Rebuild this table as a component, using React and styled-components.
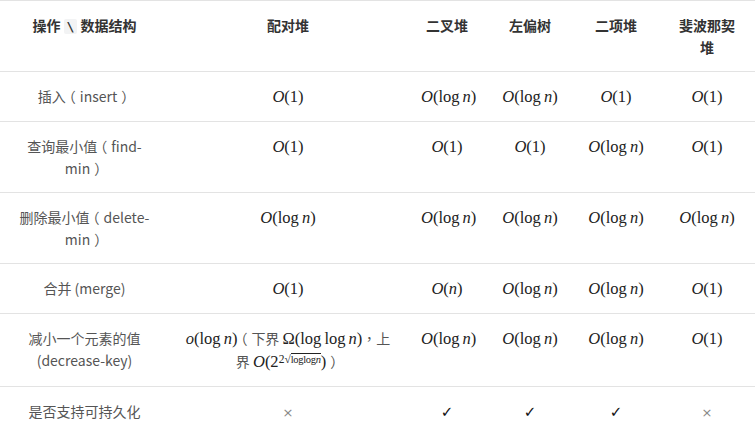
import React from "react";
import styled, { createGlobalStyle } from "styled-components";

const GlobalStyle = createGlobalStyle`
  body {
    margin: 0;
    background: #fff;
    font-family: "Noto Sans CJK SC", "Noto Sans", sans-serif;
  }
`;

const Table = styled.table`
  width: 755px;
  table-layout: fixed;
  border-collapse: collapse;
  border-top: 1px solid #e3e3e3;
  font-size: 14px;
  line-height: 22px;
`;

const Col = styled.col`
  width: ${({ $w }) => $w}px;
`;

const Th = styled.th`
  padding: 13px 14px 13px;
  vertical-align: top;
  text-align: center;
  font-weight: 700;
  color: #333;
  border-bottom: 1px solid #e3e3e3;
`;

const Td = styled.td`
  padding: 13px 14px 13px;
  vertical-align: top;
  text-align: center;
  color: #555;
  border-bottom: 1px solid ${({ $last }) => ($last ? "transparent" : "#e3e3e3")};
`;

// full-width punctuation, nudged so the glyph sits centred in its em box
const PUNCT = /[（），]/;
const Punct = styled.span`
  font-family: "Noto Sans CJK TC", "Noto Sans CJK SC", sans-serif;
  margin-left: ${({ $c }) => ($c === "（" ? "-4px" : $c === "）" ? "4px" : "0")};
  margin-right: ${({ $c }) => ($c === "（" ? "4px" : $c === "）" ? "-4px" : "0")};
`;

const Code = styled.code`
  font-family: "DejaVu Sans Mono", monospace;
  font-weight: 700;
  font-size: 13px;
  background: #f2f3f4;
  border-radius: 2px;
  padding: 0 3px;
  margin: 0 3px;
`;

const M = styled.span`
  font-family: "Liberation Serif", "DejaVu Serif", serif;
  font-size: 16.5px;
  color: #222;
  white-space: nowrap;
`;

const V = styled.i`
  font-style: italic;
`;

const Fn = styled.span`
  margin-right: 3px;
`;

const Sup = styled.sup`
  font-size: 11.5px;
  line-height: 0;
  vertical-align: 4px;
`;

const Root = styled.span`
  font-size: 10.5px;
  border-top: 1px solid #222;
  letter-spacing: -0.3px;
`;

const Mark = styled.span`
  font-family: "DejaVu Sans", sans-serif;
  font-size: ${({ $ok }) => ($ok ? "15px" : "13px")};
  color: ${({ $ok }) => ($ok ? "#111" : "#888")};
`;

const T = ({ children }) =>
  children.split(/([（），])/).map((s, i) =>
    PUNCT.test(s) ? (
      <Punct key={i} $c={s}>
        {s}
      </Punct>
    ) : (
      s
    )
  );

const O1 = () => (
  <M>
    <V>O</V>(1)
  </M>
);

const OLog = () => (
  <M>
    <V>O</V>(<Fn>log</Fn>
    <V>n</V>)
  </M>
);

const On = () => (
  <M>
    <V>O</V>(<V>n</V>)
  </M>
);

const Yes = () => <Mark $ok>✓</Mark>;
const No = () => <Mark>×</Mark>;

const rows = [
  { op: "插入（insert）", cells: [<O1 />, <OLog />, <OLog />, <O1 />, <O1 />] },
  { op: "查询最小值（find-min）", cells: [<O1 />, <O1 />, <O1 />, <OLog />, <O1 />] },
  {
    op: "删除最小值（delete-min）",
    cells: [<OLog />, <OLog />, <OLog />, <OLog />, <OLog />],
  },
  { op: "合并 (merge)", cells: [<O1 />, <On />, <OLog />, <OLog />, <O1 />] },
  {
    op: "减小一个元素的值 (decrease-key)",
    cells: [
      <>
        <M>
          <V>o</V>(<Fn>log</Fn>
          <V>n</V>)
        </M>
        <T>（下界 </T>
        <M>
          Ω(<Fn>log</Fn>
          <Fn>log</Fn>
          <V>n</V>)
        </M>
        <T>，上界 </T>
        <M>
          <V>O</V>(2
          <Sup>
            2√<Root>loglog<V>n</V></Root>
          </Sup>
          )
        </M>
        <T>）</T>
      </>,
      <OLog />,
      <OLog />,
      <OLog />,
      <O1 />,
    ],
  },
  { op: "是否支持可持久化", cells: [<No />, <Yes />, <Yes />, <Yes />, <No />] },
];

const heads = ["配对堆", "二叉堆", "左偏树", "二项堆", "斐波那契堆"];
const widths = [169, 238, 80, 86, 86, 96];

export default function App() {
  return (
    <>
      <GlobalStyle />
      <Table>
        <colgroup>
          {widths.map((w, i) => (
            <Col key={i} $w={w} />
          ))}
        </colgroup>
        <thead>
          <tr>
            <Th>
              操作<Code>\</Code>数据结构
            </Th>
            {heads.map((h) => (
              <Th key={h}>{h}</Th>
            ))}
          </tr>
        </thead>
        <tbody>
          {rows.map((r, i) => (
            <tr key={i}>
              <Td $last={i === rows.length - 1}>
                <T>{r.op}</T>
              </Td>
              {r.cells.map((c, j) => (
                <Td key={j} $last={i === rows.length - 1}>
                  {c}
                </Td>
              ))}
            </tr>
          ))}
        </tbody>
      </Table>
    </>
  );
}
